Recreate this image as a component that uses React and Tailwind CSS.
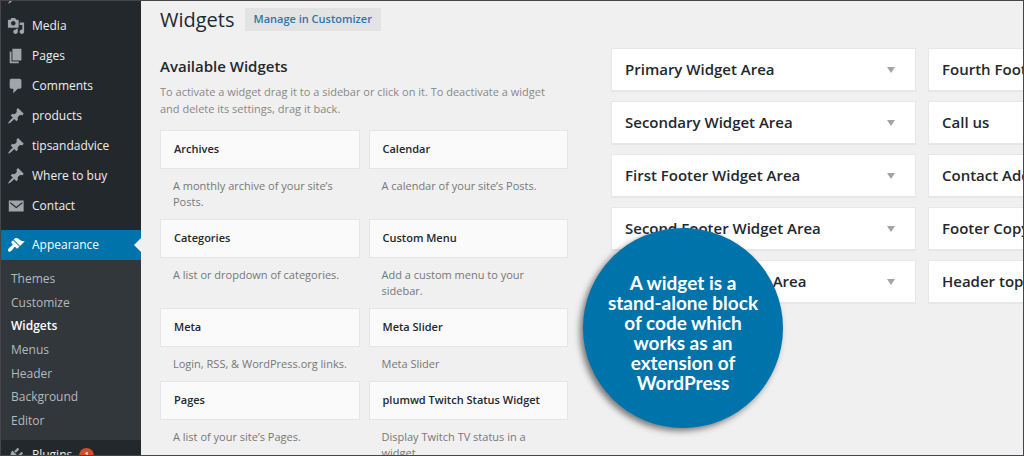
import React from "react";

const ICONS = {
  pin: "M10.44 3.02l1.82-1.82 6.36 6.35-1.83 1.82c-1.05-.68-2.48-.57-3.41.36l-.75.75c-.92.93-1.04 2.35-.35 3.41l-1.83 1.82-2.41-2.41-2.8 2.79c-.42.42-3.38 2.71-3.8 2.29s1.86-3.39 2.28-3.81l2.79-2.79L4.1 9.36l1.83-1.82c1.05.69 2.48.57 3.4-.36l.75-.75c.93-.92 1.05-2.35.36-3.41z",
  media:
    "M13 11V4c0-.55-.45-1-1-1h-1.67L9 1H5L3.67 3H2c-.55 0-1 .45-1 1v7c0 .55.45 1 1 1h10c.55 0 1-.45 1-1zM7 4.5c1.38 0 2.5 1.12 2.5 2.5S8.38 9.5 7 9.5 4.5 8.38 4.5 7 5.62 4.5 7 4.5zM14 6h5v10.5c0 1.38-1.12 2.5-2.5 2.5S14 17.88 14 16.5s1.12-2.5 2.5-2.5c.17 0 .34.02.5.05V9h-3V6zm-4 8.05V13h2v3.5c0 1.38-1.12 2.5-2.5 2.5S7 17.88 7 16.5 8.12 14 9.5 14c.17 0 .34.02.5.05z",
  pages: "M6 15V2h10v13H6zm-1 1h8v2H3V5h2v11z",
  comments:
    "M5 2h9q.82 0 1.41.59T16 4v7q0 .82-.59 1.41T14 13h-2l-5 5v-5H5q-.82 0-1.41-.59T3 11V4q0-.82.59-1.41T5 2z",
  mail: "M2 4h16.5v12H2zM3.6 5.6v1.6l6.7 5.4 6.7-5.4V5.6l-6.7 5.2z",
  brush:
    "M14.48 11.06L7.41 3.99l1.5-1.5c.5-.56 2.3-.47 3.51.32 1.21.8 1.43 1.28 2.91 2.1 1.18.64 2.45 1.26 4.45.85zm-.71.71L6.7 4.7 4.93 6.47c-.39.39-.39 1.02 0 1.41l1.06 1.06c.39.39.39 1.03 0 1.42-.6.6-1.43 1.11-2.21 1.69-.35.26-.7.53-1.01.84C1.43 14.23.4 16.08 1.4 17.07c.99 1 2.84-.03 4.18-1.36.31-.31.58-.66.85-1.02.57-.78 1.08-1.61 1.69-2.21.39-.39 1.02-.39 1.41 0l1.06 1.06c.39.39 1.02.39 1.41 0z",
  plug: "M13.11 4.36L9.87 7.6 8 5.73l3.24-3.24c.35-.34 1.05-.2 1.56.32.52.51.66 1.21.31 1.55zm-8 1.77l.91-1.12 9.01 9.01-1.19.84c-.71.71-2.63 1.16-3.82 1.16H6.14L4.9 17.26c-.59.59-1.54.59-2.12 0-.59-.58-.59-1.53 0-2.12l1.24-1.24v-3.88c0-1.13.4-3.19 1.09-3.89zm7.26 3.97l3.24-3.24c.34-.35 1.04-.21 1.55.31.52.51.66 1.21.31 1.55l-3.24 3.25z",
};

const MENU = [
  ["Posts", "pin"],
  ["Media", "media"],
  ["Pages", "pages"],
  ["Comments", "comments"],
  ["products", "pin"],
  ["tipsandadvice", "pin"],
  ["Where to buy", "pin"],
  ["Contact", "mail"],
];

const SUBMENU = ["Themes", "Customize", "Widgets", "Menus", "Header", "Background", "Editor"];

const WIDGETS = [
  ["Archives", "A monthly archive of your site’s Posts."],
  ["Calendar", "A calendar of your site’s Posts."],
  ["Categories", "A list or dropdown of categories."],
  ["Custom Menu", "Add a custom menu to your sidebar."],
  ["Meta", "Login, RSS, & WordPress.org links."],
  ["Meta Slider", "Meta Slider"],
  ["Pages", "A list of your site’s Pages."],
  ["plumwd Twitch Status Widget", "Display Twitch TV status in a widget."],
];

const AREAS = [
  [
    "Primary Widget Area",
    "Secondary Widget Area",
    "First Footer Widget Area",
    "Second Footer Widget Area",
    "Third Footer Widget Area",
  ],
  ["Fourth Footer Widget Area", "Call us", "Contact Address", "Footer Copyright", "Header top"],
];

const CALLOUT = ["A widget is a", "stand-alone block", "of code which", "works as an", "extension of", "WordPress"];

function Icon({ name, className }) {
  return (
    <svg viewBox="0 0 20 20" aria-hidden="true" className={`h-[18px] w-[18px] shrink-0 fill-current ${className}`}>
      <path fillRule="evenodd" d={ICONS[name]} />
    </svg>
  );
}

function MenuLink({ label, icon, active, children }) {
  return (
    <a
      href="#"
      className={`relative flex h-[30px] items-center gap-[7px] pl-[6px] text-xs ${
        active ? "bg-[#0073aa] text-white" : "text-[#eeeeee]"
      }`}
    >
      <Icon name={icon} className={active ? "text-white" : "text-[#a0a5aa]"} />
      {label}
      {children}
    </a>
  );
}

function Sidebar() {
  return (
    <nav aria-label="Admin menu" className="w-[140px] shrink-0 overflow-hidden bg-[#23282d]">
      <ul className="-mt-5 mb-[9px]">
        {MENU.map(([label, icon]) => (
          <li key={label}>
            <MenuLink label={label} icon={icon} />
          </li>
        ))}
      </ul>
      <MenuLink label="Appearance" icon="brush" active>
        <span className="absolute right-0 top-2 border-y-[7px] border-r-[7px] border-y-transparent border-r-[#f0f0f0]" />
      </MenuLink>
      <ul className="grid h-[180px] grid-rows-7 bg-[#32373c] py-[7px] pl-[10px] text-xs">
        {SUBMENU.map((label) => (
          <li key={label} className="flex items-center">
            <a href="#" className={label === "Widgets" ? "font-semibold text-white" : "text-[#b4b9be]"}>
              {label}
            </a>
          </li>
        ))}
      </ul>
      <MenuLink label="Plugins" icon="plug">
        <span className="flex h-[15px] w-[15px] items-center justify-center rounded-full bg-[#d54e21] text-[8px] font-semibold text-white">
          1
        </span>
      </MenuLink>
    </nav>
  );
}

function WidgetCard({ title, text }) {
  return (
    <li className="pb-[9px]">
      <h3 className="flex h-[39px] items-center border border-[#e5e5e5] bg-[#fafafa] pl-[13px] pr-1 text-[11px] font-semibold text-[#23282d]">
        {title}
      </h3>
      <p className="pl-[13px] pr-2 pt-[9px] text-[11px] leading-4 text-[#777777]">{text}</p>
    </li>
  );
}

function AreaPanel({ title }) {
  return (
    <button
      type="button"
      className="flex h-[43px] w-full items-center justify-between whitespace-nowrap border border-[#e8e8e8] bg-white pl-[13px] pr-5 text-left text-[15px] font-semibold text-[#23282d] shadow-[0_1px_1px_rgba(0,0,0,0.04)]"
    >
      {title}
      <span className="border-x-4 border-t-[6px] border-x-transparent border-t-[#a0a5aa]" />
    </button>
  );
}

export default function App() {
  return (
    <div className="flex h-screen overflow-hidden border border-[#48454a] bg-[#f0f0f0] font-['Open_Sans','Noto_Sans',sans-serif]">
      <Sidebar />
      <main className="relative min-w-0 flex-1 overflow-hidden pl-[19px]">
        <header className="flex h-[47px] items-start gap-[10px] pt-[7px]">
          <h1 className="text-xl leading-6 text-[#23282d]">Widgets</h1>
          <a href="#" className="flex h-[23px] items-center bg-[#e3e3e3] px-[9px] text-[11px] font-semibold text-[#2e75a8]">
            Manage in Customizer
          </a>
        </header>
        <div className="flex gap-[43px]">
          <section className="w-[408px] shrink-0">
            <h2 className="pt-2 text-[15px] font-semibold leading-5 text-[#23282d]">Available Widgets</h2>
            <p className="pb-[13px] pr-2 pt-[7px] text-[11px] leading-[17px] text-[#888888]">
              To activate a widget drag it to a sidebar or click on it. To deactivate a widget and delete its settings,
              drag it back.
            </p>
            <ul className="grid grid-cols-2 gap-x-[9px]">
              {WIDGETS.map(([title, text]) => (
                <WidgetCard key={title} title={title} text={text} />
              ))}
            </ul>
          </section>
          <section aria-label="Widget areas" className="flex flex-1 gap-3">
            {AREAS.map((column) => (
              <div key={column[0]} className="flex min-w-[305px] flex-1 flex-col gap-[10px]">
                {column.map((title) => (
                  <AreaPanel key={title} title={title} />
                ))}
              </div>
            ))}
          </section>
        </div>
        <p className="absolute left-[442px] top-[227px] flex h-[200px] w-[200px] flex-col items-center justify-center whitespace-nowrap rounded-full bg-[#0073aa] pt-[10px] font-['Lato',sans-serif] text-[19px] font-bold leading-5 text-white shadow-[-3px_3px_6px_rgba(0,0,0,0.5)]">
          {CALLOUT.map((line) => (
            <span key={line}>{line} </span>
          ))}
        </p>
      </main>
    </div>
  );
}
